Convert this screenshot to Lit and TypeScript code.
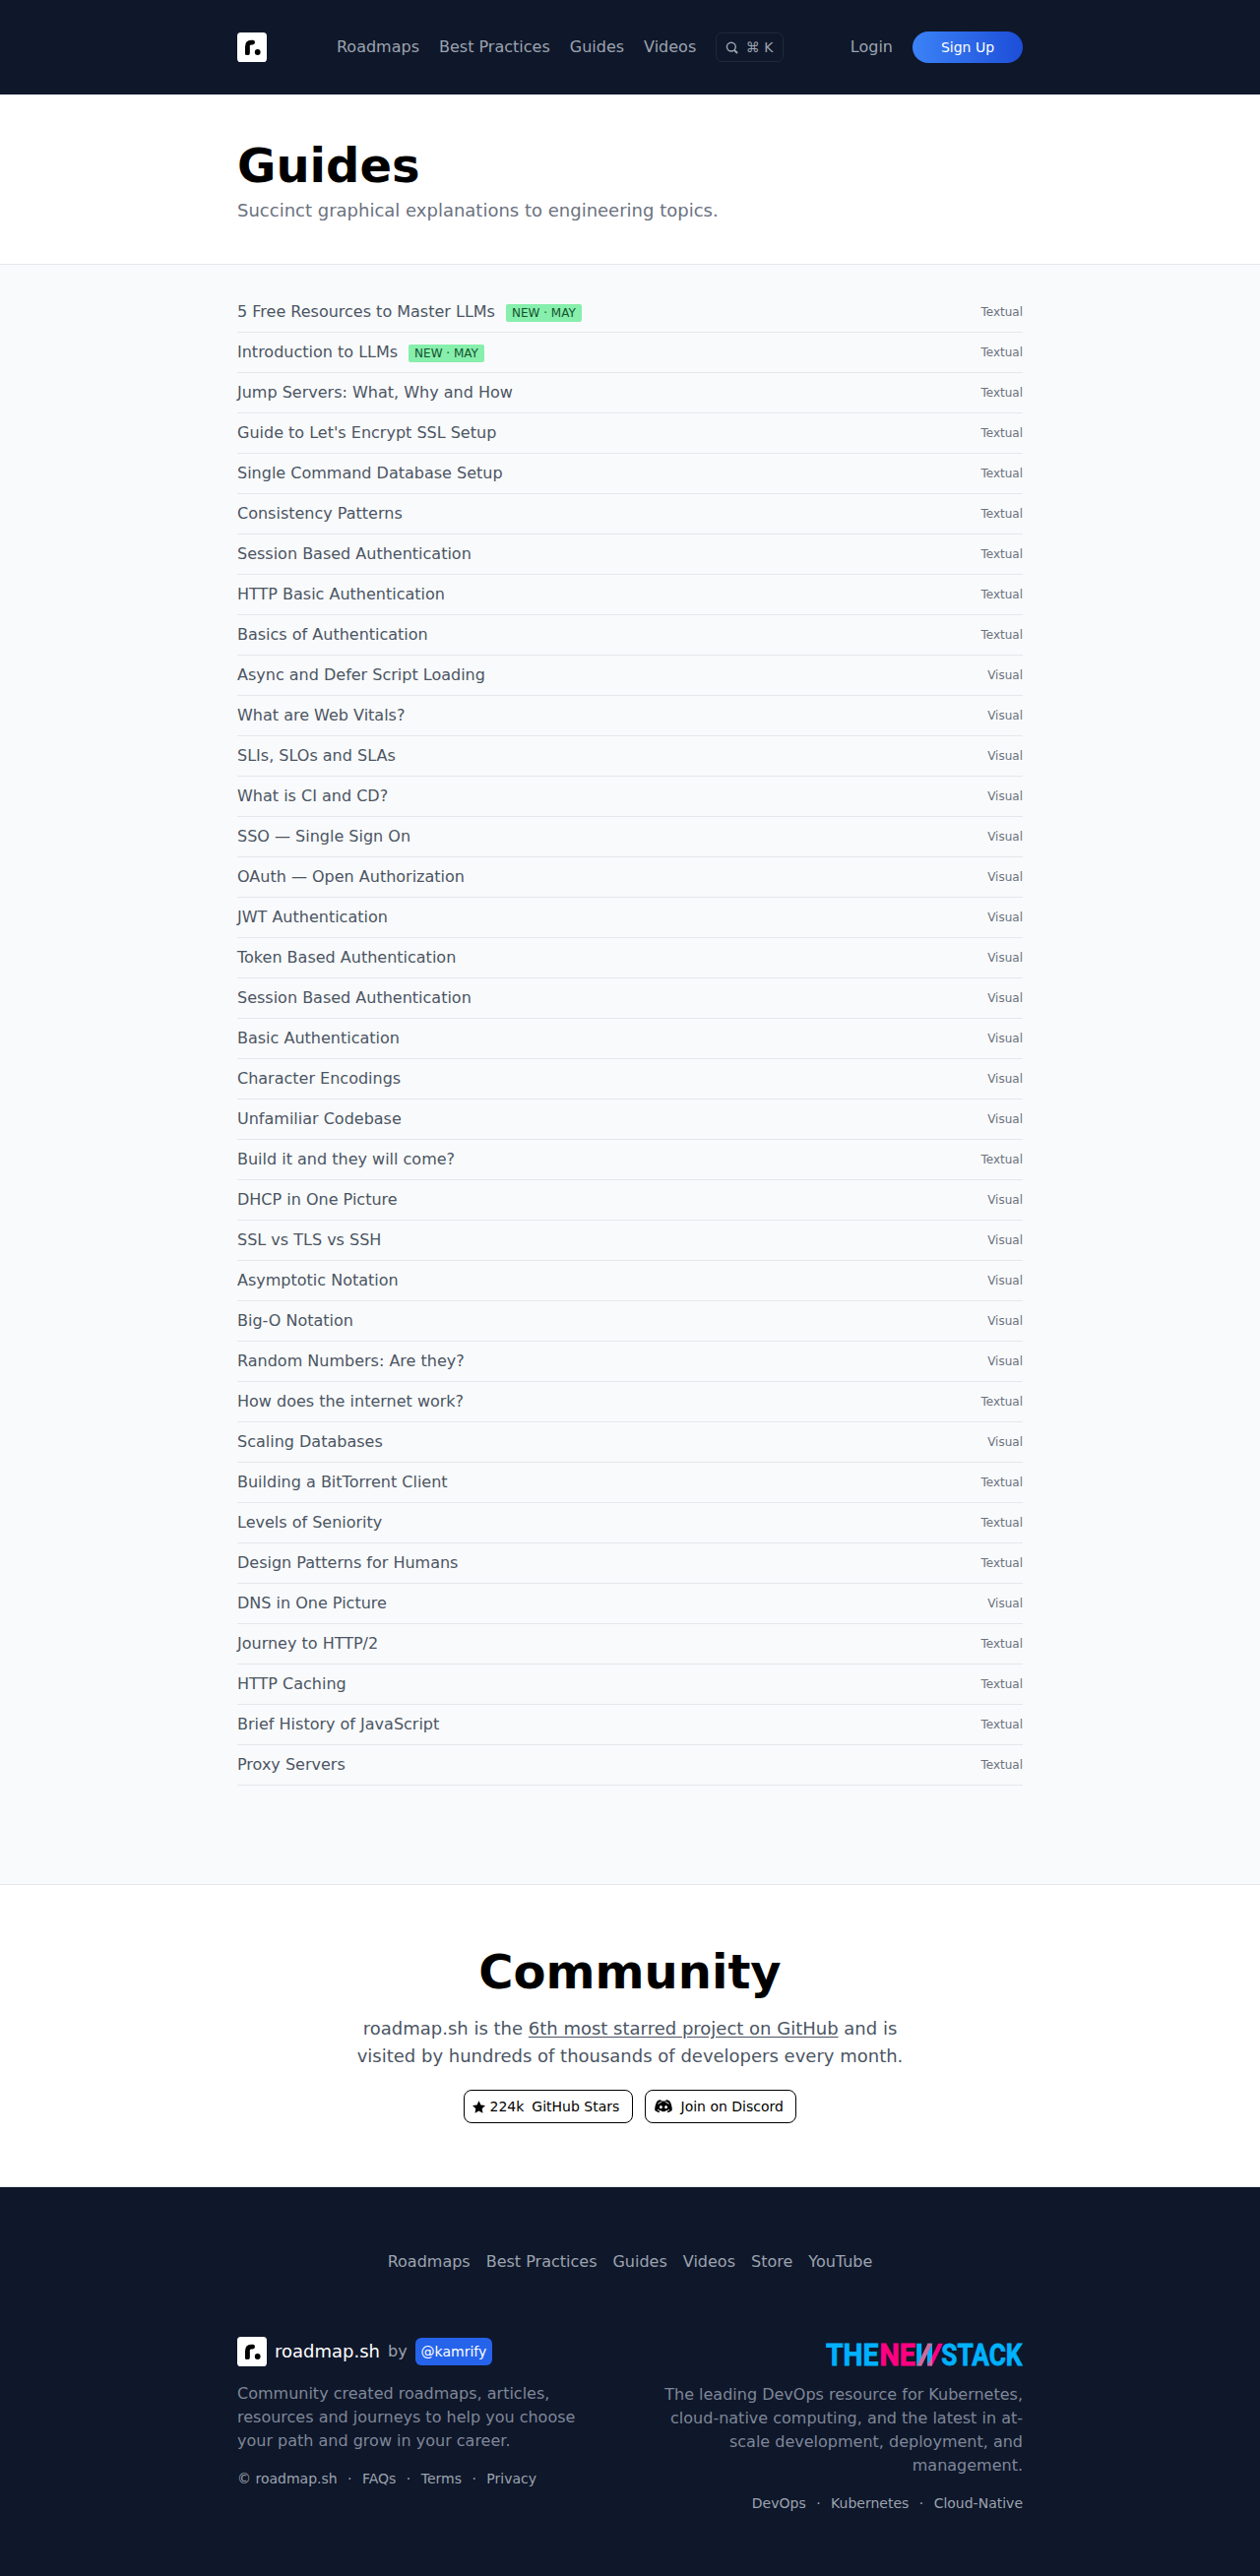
import { LitElement, html, css, svg } from "lit";
import { customElement } from "lit/decorators.js";

type Guide = [title: string, kind: "Textual" | "Visual", badge?: string];

const GUIDES: Guide[] = [
  ["5 Free Resources to Master LLMs", "Textual", "New · May"],
  ["Introduction to LLMs", "Textual", "New · May"],
  ["Jump Servers: What, Why and How", "Textual"],
  ["Guide to Let's Encrypt SSL Setup", "Textual"],
  ["Single Command Database Setup", "Textual"],
  ["Consistency Patterns", "Textual"],
  ["Session Based Authentication", "Textual"],
  ["HTTP Basic Authentication", "Textual"],
  ["Basics of Authentication", "Textual"],
  ["Async and Defer Script Loading", "Visual"],
  ["What are Web Vitals?", "Visual"],
  ["SLIs, SLOs and SLAs", "Visual"],
  ["What is CI and CD?", "Visual"],
  ["SSO — Single Sign On", "Visual"],
  ["OAuth — Open Authorization", "Visual"],
  ["JWT Authentication", "Visual"],
  ["Token Based Authentication", "Visual"],
  ["Session Based Authentication", "Visual"],
  ["Basic Authentication", "Visual"],
  ["Character Encodings", "Visual"],
  ["Unfamiliar Codebase", "Visual"],
  ["Build it and they will come?", "Textual"],
  ["DHCP in One Picture", "Visual"],
  ["SSL vs TLS vs SSH", "Visual"],
  ["Asymptotic Notation", "Visual"],
  ["Big-O Notation", "Visual"],
  ["Random Numbers: Are they?", "Visual"],
  ["How does the internet work?", "Textual"],
  ["Scaling Databases", "Visual"],
  ["Building a BitTorrent Client", "Textual"],
  ["Levels of Seniority", "Textual"],
  ["Design Patterns for Humans", "Textual"],
  ["DNS in One Picture", "Visual"],
  ["Journey to HTTP/2", "Textual"],
  ["HTTP Caching", "Textual"],
  ["Brief History of JavaScript", "Textual"],
  ["Proxy Servers", "Textual"],
];

const brandMark = html`<svg class="mark" viewBox="0 0 30 30" aria-label="roadmap.sh">
  <rect width="30" height="30" rx="3.6" fill="#fff" />
  <path d="M10.3 20.4V14.4Q10.3 10.1 14.2 10.1H15.7" fill="none" stroke="#000" stroke-width="4.6" stroke-linecap="round" stroke-linejoin="round" />
  <rect x="8" y="14" width="4.6" height="8.7" rx="1" />
  <circle cx="20.7" cy="20" r="2.9" />
</svg>`;

const searchIcon = html`<svg class="search-icon" viewBox="0 0 20 20" fill="none" stroke="currentColor" stroke-width="2.2">
  <circle cx="9" cy="8.6" r="6.8" />
  <path d="M13.6 13.4L18.6 18.4" stroke-width="3" />
</svg>`;

const starIcon = html`<svg class="star-icon" viewBox="0 0 24 24">
  <path d="M12 .6l3.7 7.6 8.3 1.1-6.1 5.8 1.5 8.3L12 19.4l-7.4 4 1.5-8.3L0 9.3l8.3-1.1z" />
</svg>`;

const discordIcon = html`<svg class="discord-icon" viewBox="0 0 18 14">
  <path d="M6.3 .3C5 .4 3.9 .8 2.9 1.3 1.1 4 .1 7.2 .2 10.8c1.3 1.3 2.8 2.1 4.3 2.5l1-1.8c3 .9 4.4 .8 7 0l1 1.8c1.5-.4 3-1.2 4.3-2.5 .1-3.6-.9-6.8-2.7-9.5C14.1 .8 13 .4 11.7 .3l-.6 1.100H6.9z" />
  <path d="M3.3 4.3C4.4 3.4 5.7 2.8 7 2.5M14.7 4.3C13.6 3.4 12.3 2.8 11 2.5" stroke="#fff" stroke-width=".9" fill="none" />
  <path d="M3 10.3c1.2 .9 2.6 1.5 4 1.7M15 10.3c-1.2 .9-2.6 1.5-4 1.7" stroke="#fff" stroke-width=".9" fill="none" />
  <ellipse cx="6.4" cy="7.7" rx="1.4" ry="1.6" fill="#fff" />
  <ellipse cx="11.6" cy="7.7" rx="1.4" ry="1.6" fill="#fff" />
</svg>`;

const word = (x: number, width: number, text: string, fill: string) =>
  svg`<text x=${x} y="23" textLength=${width} lengthAdjust="spacingAndGlyphs" fill=${fill} stroke=${fill}>${text}</text>`;

const stackLogo = html`<svg class="stack-logo" viewBox="0 0 200 24" aria-label="The New Stack">
  <defs>
    <clipPath id="bar"><rect x="103" y=".7" width="5" height="22.7" /></clipPath>
  </defs>
  ${word(0, 53.5, "THE", "#00b1ff")}
  ${word(54.5, 36.5, "NE", "#ff0082")}
  <rect x="92.2" y=".7" width="5" height="22.7" fill="#00b1ff" />
  <rect x="103" y=".7" width="5" height="22.7" fill="#00b1ff" />
  <rect x="103.8" y=".7" width="4.8" height="22.7" fill="#d0699b" transform="skewX(-25.8)" />
  <rect x="114.5" y=".7" width="4.8" height="22.7" fill="#ff0082" transform="skewX(-25.8)" />
  <g clip-path="url(#bar)">
    <rect x="114.5" y=".7" width="4.8" height="22.7" fill="#d0699b" transform="skewX(-25.8)" />
  </g>
  ${word(117.3, 82.2, "STACK", "#00b1ff")}
</svg>`;

@customElement("app-root")
export class AppRoot extends LitElement {
  static styles = css`
    :host { display: block; font-family: "DejaVu Sans", sans-serif; font-size: 16px; line-height: 24px; color: #000; background: #fff; }
    * { box-sizing: border-box; }
    h1, h2, p, ul { margin: 0; padding: 0; }
    ul { list-style: none; }
    svg { display: block; flex: none; }
    a { color: inherit; text-decoration: none; }
    .container { width: 830px; margin: 0 auto; padding: 0 16px; }
    .topbar { background: #0f172a; color: #9ca3af; padding: 32px 0; }
    .topbar .container { display: flex; align-items: center; justify-content: space-between; height: 32px; }
    .mark { width: 30px; height: 30px; }
    .nav { display: flex; align-items: center; gap: 20px; }
    .primary { margin-left: 3px; }
    .search { display: flex; align-items: center; gap: 7.5px; height: 30px; padding: 0 9.5px 0 9px; border: 1px solid #1f2937; border-radius: 6px; font-size: 14px; line-height: 20px; }
    .search-icon { width: 13px; height: 13px; }
    .signup { display: flex; align-items: center; justify-content: center; width: 112px; height: 32px; border-radius: 16px; background: linear-gradient(to right, #3b82f6, #1d4ed8); color: #fff; font-size: 14px; }
    .hero { padding: 48px 0 40px; border-bottom: 1px solid #e5e7eb; }
    h1, h2 { font-size: 48px; line-height: 48px; font-weight: 700; }
    .hero p { margin-top: 8px; font-size: 18px; line-height: 28px; color: #6b7280; }
    .guides { background: #f9fafb; padding: 28px 0 100px; }
    .guide { display: flex; align-items: center; justify-content: space-between; padding: 8px 0; border-bottom: 1px solid #e5e7eb; color: #4b5563; }
    .badge { margin-left: 11px; padding: 2px 6px; border-radius: 2px; background: #86efac; color: #14532d; font-size: 12px; line-height: 16px; text-transform: uppercase; }
    .kind { font-size: 12px; line-height: 16px; color: #6b7280; }
    .community { border-top: 1px solid #e5e7eb; border-bottom: 1px solid #e5e7eb; padding: 64px 0; text-align: center; }
    .community p { width: 600px; margin: 20px auto; font-size: 18px; line-height: 28px; color: #4b5563; }
    .underlined { text-decoration: underline; text-underline-offset: 2px; }
    .actions { display: flex; justify-content: center; gap: 12px; }
    .action { display: flex; align-items: center; height: 34px; border: 1px solid #000; border-radius: 8px; font-size: 14px; line-height: 20px; padding-left: 8px; white-space: nowrap; }
    .stars { width: 172px; }
    .discord { width: 154px; }
    .star-icon { width: 13px; height: 13px; margin-right: 4.5px; }
    .count { margin-right: 8px; }
    .discord-icon { width: 18px; height: 14px; margin: 0 8.5px 0 1px; }
    .footer { background: #0f172a; color: #9ca3af; padding: 64px 0; }
    .footer-nav { display: flex; justify-content: center; gap: 16px; }
    .columns { display: flex; justify-content: space-between; margin-top: 64px; }
    .about { width: 367px; }
    .sponsor { width: 367px; display: flex; flex-direction: column; align-items: flex-end; text-align: right; padding-top: 6px; }
    .brand { display: flex; align-items: center; height: 30px; }
    .brand-name { margin: 0 8px; font-size: 18px; color: #fff; }
    .handle { margin-left: 8px; padding: 4px 6px; border-radius: 6px; background: #2563eb; color: #fff; font-size: 14px; line-height: 20px; }
    .blurb { margin: 16px 0; color: rgb(203 213 225 / 0.6); }
    .sponsor .blurb { margin-top: 17px; }
    .links { display: flex; gap: 10.45px; font-size: 14px; line-height: 20px; }
    .stack-logo { width: 200px; height: 24px; overflow: visible; font: 700 31px "Roboto", sans-serif; stroke-width: .8px; }
  `;

  private links(items: string[]) {
    return html`<div class="links">
      ${items.map((item, i) => html`${i ? html`<span>·</span>` : ""}<a>${item}</a>`)}
    </div>`;
  }

  render() {
    return html`
      <header class="topbar">
        <div class="container">
          ${brandMark}
          <nav class="nav primary">
            <a>Roadmaps</a><a>Best Practices</a><a>Guides</a><a>Videos</a>
            <div class="search">${searchIcon}<span>⌘ K</span></div>
          </nav>
          <div class="nav"><a>Login</a><a class="signup">Sign Up</a></div>
        </div>
      </header>
      <section class="hero">
        <div class="container">
          <h1>Guides</h1>
          <p>Succinct graphical explanations to engineering topics.</p>
        </div>
      </section>
      <section class="guides">
        <ul class="container">
          ${GUIDES.map(([title, kind, badge]) => html`<li class="guide">
            <span>${title}${badge ? html`<span class="badge">${badge}</span>` : ""}</span>
            <span class="kind">${kind}</span>
          </li>`)}
        </ul>
      </section>
      <section class="community">
        <h2>Community</h2>
        <p>roadmap.sh is the <a class="underlined">6th most starred project on GitHub</a> and is visited by hundreds of thousands of developers every month.</p>
        <div class="actions">
          <a class="action stars">${starIcon}<span class="count">224k</span><span>GitHub Stars</span></a>
          <a class="action discord">${discordIcon}<span>Join on Discord</span></a>
        </div>
      </section>
      <footer class="footer">
        <div class="container">
          <nav class="footer-nav">
            ${["Roadmaps", "Best Practices", "Guides", "Videos", "Store", "YouTube"].map((item) => html`<a>${item}</a>`)}
          </nav>
          <div class="columns">
            <div class="about">
              <div class="brand">${brandMark}<span class="brand-name">roadmap.sh</span><span>by</span><a class="handle">@kamrify</a></div>
              <p class="blurb">Community created roadmaps, articles, resources and journeys to help you choose your path and grow in your career.</p>
              ${this.links(["© roadmap.sh", "FAQs", "Terms", "Privacy"])}
            </div>
            <div class="sponsor">
              ${stackLogo}
              <p class="blurb">The leading DevOps resource for Kubernetes, cloud-native computing, and the latest in at-scale development, deployment, and management.</p>
              ${this.links(["DevOps", "Kubernetes", "Cloud-Native"])}
            </div>
          </div>
        </div>
      </footer>
    `;
  }
}
